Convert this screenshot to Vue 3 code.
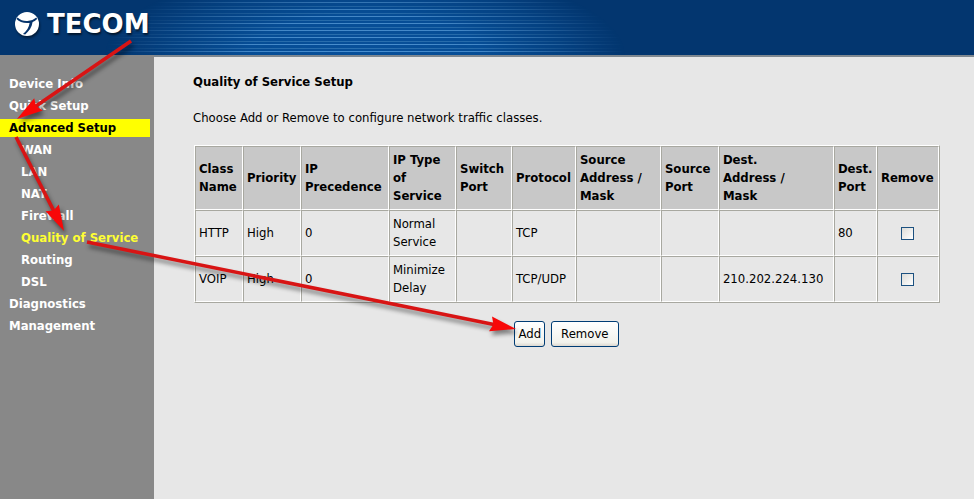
<script setup>
import { reactive } from 'vue'

const menu = [
  { label: 'Device Info' },
  { label: 'Quick Setup' },
  { label: 'Advanced Setup', state: 'open' },
  { label: 'WAN', sub: true },
  { label: 'LAN', sub: true },
  { label: 'NAT', sub: true },
  { label: 'Firewall', sub: true },
  { label: 'Quality of Service', sub: true, state: 'current' },
  { label: 'Routing', sub: true },
  { label: 'DSL', sub: true },
  { label: 'Diagnostics' },
  { label: 'Management' },
]

const columns = [
  { title: ['Class', 'Name'], key: 'name', share: 48 },
  { title: ['Priority'], key: 'priority', share: 58 },
  { title: ['IP', 'Precedence'], key: 'precedence', share: 88 },
  { title: ['IP Type', 'of', 'Service'], key: 'tos', share: 67 },
  { title: ['Switch', 'Port'], key: 'switchPort', share: 56 },
  { title: ['Protocol'], key: 'protocol', share: 64 },
  { title: ['Source', 'Address /', 'Mask'], key: 'source', share: 85 },
  { title: ['Source', 'Port'], key: 'sourcePort', share: 58 },
  { title: ['Dest.', 'Address /', 'Mask'], key: 'dest', share: 115 },
  { title: ['Dest.', 'Port'], key: 'destPort', share: 43 },
  { title: ['Remove'], key: 'remove', share: 62 },
]
const totalShare = columns.reduce((sum, c) => sum + c.share, 0)

const rows = reactive([
  { name: 'HTTP', priority: 'High', precedence: '0', tos: 'Normal Service', protocol: 'TCP', destPort: '80', remove: false },
  { name: 'VOIP', priority: 'High', precedence: '0', tos: 'Minimize Delay', protocol: 'TCP/UDP', dest: '210.202.224.130', remove: false },
])

const arrows = [
  { from: [131, 41], to: [17, 119] },
  { from: [16, 137], to: [64, 231] },
  { from: [87, 242], to: [516, 329] },
].map(({ from, to }) => {
  const dx = to[0] - from[0]
  const dy = to[1] - from[1]
  return {
    x: from[0],
    y: from[1],
    length: Math.hypot(dx, dy),
    angle: (Math.atan2(dy, dx) * 180) / Math.PI,
  }
})
</script>

<template>
  <div class="page">
    <header class="banner">
      <div class="stripes"></div>
      <svg class="mark" viewBox="0 0 24 24" aria-hidden="true">
        <circle cx="12" cy="12" r="12" fill="#fff" />
        <path d="M2.500 5.500C5.500 8.300 9 9.300 12.500 9C16 8.700 19 7.500 21.300 5.500L22.200 7C20.500 8.600 19 9.400 17.500 10.200C17 15 14 19 10.200 22.500L8 22C11.800 18.800 14 15.200 14.600 10.900C9 11.600 4.500 10 1.500 7Z" fill="#06346c" />
      </svg>
      <span class="brand">TECOM</span>
    </header>

    <div class="body">
      <nav class="sidebar">
        <a
          v-for="item in menu"
          :key="item.label"
          href="#"
          :class="['item', item.state, { sub: item.sub }]"
        >{{ item.label }}</a>
      </nav>

      <main class="content">
        <h1>Quality of Service Setup</h1>
        <p>Choose Add or Remove to configure network traffic classes.</p>

        <div class="classes">
          <table>
            <colgroup>
              <col v-for="c in columns" :key="c.key" :style="{ width: (c.share / totalShare) * 100 + '%' }" />
            </colgroup>
            <thead>
              <tr>
                <th v-for="c in columns" :key="c.key" scope="col">
                  <template v-for="(line, i) in c.title" :key="i"><br v-if="i" />{{ line }}</template>
                </th>
              </tr>
            </thead>
            <tbody>
              <tr v-for="row in rows" :key="row.name">
                <td v-for="c in columns" :key="c.key" :class="{ pick: c.key === 'remove' }">
                  <input v-if="c.key === 'remove'" v-model="row.remove" type="checkbox" :aria-label="'Remove ' + row.name" />
                  <template v-else>{{ row[c.key] }}</template>
                </td>
              </tr>
            </tbody>
          </table>
        </div>

        <div class="actions">
          <button type="button">Add</button>
          <button type="button" class="remove">Remove</button>
        </div>
      </main>
    </div>

    <svg class="arrows" aria-hidden="true">
      <g v-for="(a, i) in arrows" :key="i" class="arrow">
        <g :transform="`translate(${a.x} ${a.y}) rotate(${a.angle})`">
          <line x1="0" y1="0" :x2="a.length - 20" y2="0" stroke="#d81414" stroke-width="3.600" />
          <path :transform="`translate(${a.length} 0)`" d="M0 0L-26 -7.500L-23 0L-26 7.500Z" fill="#f80808" />
        </g>
      </g>
    </svg>
  </div>
</template>

<style>
html,
body {
  background: #e7e7e7;
}
</style>

<style scoped>
.page {
  position: relative;
  display: flex;
  flex-direction: column;
  min-height: 100vh;
  font-family: "DejaVu Sans Condensed", Tahoma, sans-serif;
  font-size: 13px;
  line-height: 18px;
  color: #000;
}

.banner {
  position: relative;
  display: flex;
  align-items: center;
  gap: 8px;
  height: 55px;
  padding: 0 15px 8px;
  box-sizing: border-box;
  background: #03366f;
}

.stripes {
  position: absolute;
  inset: 0;
  background:
    repeating-linear-gradient(180deg, transparent 0 2px, #4a90d0 2px 3px, transparent 3px 6px, #2a70b0 6px 7px),
    #07509a;
  mask-image: radial-gradient(260px 90px at 365px 55px, #000 0%, rgba(0, 0, 0, 0.9) 45%, rgba(0, 0, 0, 0.45) 75%, transparent 100%);
}

.mark {
  position: relative;
  width: 24px;
  height: 24px;
  filter: drop-shadow(1px 2px 1px rgba(0, 0, 0, 0.5));
}

.brand {
  position: relative;
  font: bold 26px/30px "DejaVu Sans", Verdana, sans-serif;
  color: #fff;
  text-shadow: 1px 2px 2px rgba(0, 0, 0, 0.6);
}

.body {
  display: flex;
  flex: 1;
}

.sidebar {
  display: flex;
  flex-direction: column;
  gap: 4px;
  flex: 0 0 154px;
  padding: 20px 4px 20px 0;
  box-sizing: border-box;
  background: #888;
}

.item {
  padding-left: 9px;
  font-weight: 700;
  color: #fff;
  text-decoration: none;
}

.item.sub {
  padding-left: 21px;
}

.item.open {
  background: #ff0;
  color: #000;
}

.item.current {
  color: #ff3;
}

.content {
  flex: 1;
  min-width: 0;
  padding: 16px 34px 16px 39px;
  border-top: 2px solid #7f8890;
}

h1 {
  margin: 0 0 18px;
  font-size: 13px;
  line-height: 18px;
  font-weight: 700;
}

p {
  margin: 0 0 18px;
}

.classes {
  padding-left: 1px;
}

table {
  width: 100%;
  table-layout: fixed;
  border-collapse: separate;
  border-spacing: 0;
  border: 1px solid;
  border-color: #fff #a8a8a0 #a8a8a0 #fff;
}

th,
td {
  padding: 4px 3px;
  border: 1px solid;
  border-color: #a8a8a0 #fff #fff #a8a8a0;
  text-align: left;
  vertical-align: middle;
}

th {
  background: #c8c8c8;
  font-weight: 700;
  white-space: nowrap;
}

.pick {
  text-align: center;
}

input {
  appearance: none;
  display: block;
  width: 13px;
  height: 13px;
  margin: 0 auto;
  border: 1px solid #1c5180;
  background: linear-gradient(135deg, #dcdcd8, #fff);
}

input:checked {
  background: #21a121;
}

.actions {
  display: flex;
  justify-content: center;
  gap: 6px;
  margin-top: 18px;
}

button {
  height: 26px;
  padding: 0 3px;
  border: 1px solid #003c74;
  border-radius: 3px;
  background: linear-gradient(#fff, #f2f2ec 85%, #dcd8d0);
  font: inherit;
  color: #000;
}

.remove {
  padding: 0 9px;
}

.arrows {
  position: absolute;
  inset: 0;
  width: 100%;
  height: 100%;
  pointer-events: none;
}

.arrow {
  filter: drop-shadow(2px 4px 2px rgba(0, 0, 0, 0.45));
}
</style>
